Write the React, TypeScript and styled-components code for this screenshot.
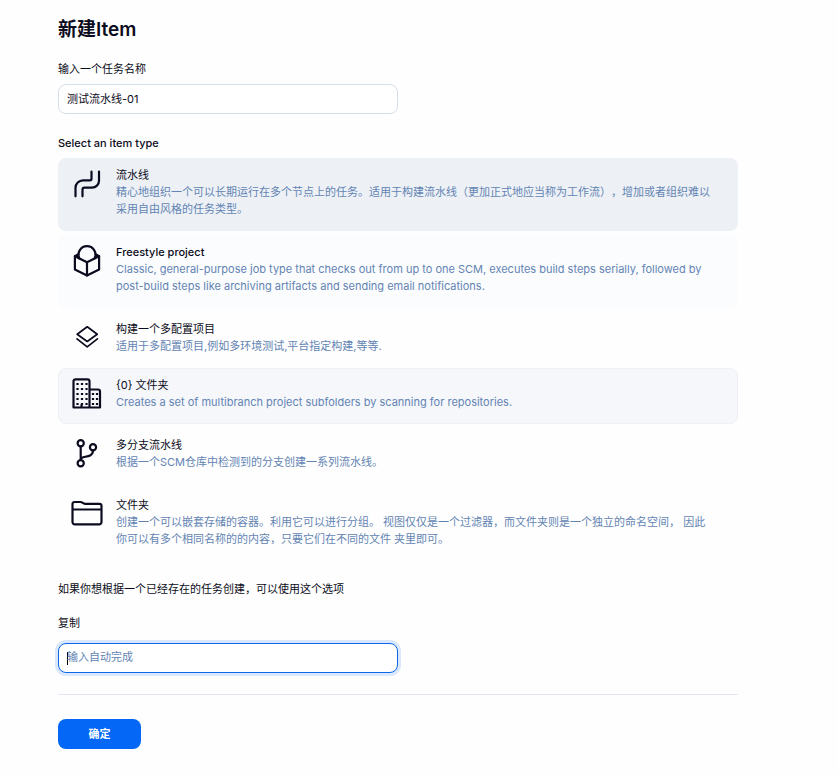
import React, { useState } from "react";
import styled, { createGlobalStyle } from "styled-components";

const ink = "#0b0b20";
const muted = "#6384b3";

const GlobalStyle = createGlobalStyle`
  *, *::before, *::after { box-sizing: border-box; }
  body {
    margin: 0;
    background: #fefefe;
    color: ${ink};
    font-family: Inter, "Noto Sans CJK SC", sans-serif;
    font-size: 11px;
    font-weight: 400;
    line-height: 17px;
    text-spacing-trim: space-all;
  }
`;

const Page = styled.form`
  max-width: 838px;
  padding: 17px 100px 26px 58px;
`;

const Title = styled.h1`
  margin: 0 0 19px;
  font-size: 19px;
  line-height: 25px;
  font-weight: 600;
`;

const Field = styled.div<{ $gap: number }>`
  display: flex;
  flex-direction: column;
  gap: ${(p) => p.$gap}px;
`;

const TextInput = styled.input`
  width: 100%;
  max-width: 340px;
  height: 30px;
  padding: 0 8px 2px;
  border: 1px solid #d5dfeb;
  border-radius: 8px;
  background: #fff;
  color: ${ink};
  font: inherit;
  outline: none;

  &::placeholder {
    color: ${muted};
    opacity: 1;
  }
  &:focus {
    border-color: #0a68ea;
    box-shadow: 0 0 0 3px #dae7fc;
  }
  &:focus:placeholder-shown {
    caret-color: transparent;
    background: linear-gradient(#000, #000) 8px center / 1px 13px no-repeat #fff;
  }
`;

const Types = styled.fieldset`
  margin: 21px 0 20px;
  padding: 0;
  border: 0;
  min-width: 0;
`;

const Legend = styled.legend`
  padding: 0;
  margin-bottom: 6px;
  font-weight: 500;
`;

const TypeList = styled.div`
  display: flex;
  flex-direction: column;
  gap: 4px;
`;

type Tone = "plain" | "faint" | "hover" | "selected";
const fills: Record<Tone, string> = {
  plain: "transparent",
  faint: "#fbfcfe",
  hover: "#f6f7fb",
  selected: "#edf1f6",
};

const Option = styled.label<{ $tone: Tone; $compact?: boolean }>`
  display: grid;
  grid-template-columns: 32px 1fr;
  column-gap: 13px;
  padding: 8px 15px ${(p) => (p.$compact ? 8 : 12)}px 12px;
  border: 1px solid ${(p) => (p.$tone === "hover" ? "#eef0f6" : "transparent")};
  border-radius: 8px;
  background: ${(p) => fills[p.$tone]};
  cursor: pointer;

  &:focus-within {
    outline: 2px solid #0a68ea;
  }
`;

const Radio = styled.input`
  position: absolute;
  opacity: 0;
  pointer-events: none;
`;

const IconBox = styled.span`
  padding-top: 1px;
  height: 33px;

  svg {
    display: block;
    width: 32px;
    height: 32px;
    fill: none;
    stroke: ${ink};
    stroke-width: 2.2;
    stroke-linecap: round;
    stroke-linejoin: round;
  }
`;

const Name = styled.span<{ $latin?: boolean }>`
  display: block;
  font-weight: ${(p) => (p.$latin ? 500 : 400)};
`;

const Description = styled.span`
  display: block;
  color: ${muted};
`;

const Paragraph = styled.p`
  margin: 0 0 17px;
`;

const Footer = styled.div`
  margin-top: 21px;
  padding-top: 24px;
  border-top: 1px solid #e3e7f1;
`;

const Submit = styled.button`
  min-width: 83px;
  height: 30px;
  padding: 0 30px;
  border: 0;
  border-radius: 8px;
  background: #0467f5;
  color: #fff;
  font: inherit;
  font-weight: 700;
  cursor: pointer;
`;

const PipelineIcon = () => (
  <svg viewBox="0 0 32 32">
    <path d="M20.500 3.600v7.200a1.500 1.500 0 0 1-1.500 1.500H12A7.500 7.500 0 0 0 4.500 19.800V28.300" />
    <path d="M28 3.600v9.100a7 7 0 0 1-7 7h-7.500a2 2 0 0 0-2 2v6.600" />
  </svg>
);

const FreestyleIcon = () => (
  <svg viewBox="0 0 32 32">
    <path d="M7.500 9.200L3.900 11.200V24.500L16 30.500l12.100-6V11.200L24.500 9.200" />
    <path d="M3.900 11.200L16 17.200l12.100-6M16 17.200v13.300" />
    <path d="M8.300 13.300a8.500 8.500 0 1 1 15.400 0" />
    <path d="M6.500 10.300l1 2M25.500 10.300l-1 2" />
  </svg>
);

const LayersIcon = () => (
  <svg viewBox="0 0 32 32">
    <path d="M16.200 4.800L26.200 12.200 16.200 19.500 6.200 12.200z" strokeWidth="1.700" />
    <path d="M6 16.800l10.200 8 10.200-8" strokeWidth="1.700" />
  </svg>
);

const BuildingsIcon = () => (
  <svg viewBox="0 0 32 32">
    <path d="M2.500 29.500V3.300A2 2 0 0 1 4.500 1.300h12a2 2 0 0 1 2 2v26.200zM18.500 11.500h8.500a2 2 0 0 1 2 2v16H18.500M10.500 27v2" />
    <path
      strokeLinecap="butt"
      strokeDasharray="2 3"
      d="M6.500 5v22M11 5v22M15.500 5v22M22 15v12M26 15v12"
    />
  </svg>
);

const BranchIcon = () => (
  <svg viewBox="0 0 32 32">
    <circle cx="9.700" cy="5.200" r="3.100" />
    <circle cx="9.700" cy="25.300" r="3.100" />
    <circle cx="22" cy="9.300" r="3.100" />
    <path d="M9.700 8.500v13.500M9.700 21c.8-3.600 12.300-.500 12.300-8.500" />
  </svg>
);

const FolderIcon = () => (
  <svg viewBox="0 0 32 32">
    <path d="M1.500 24V6a2 2 0 0 1 2-2h6c2 0 2.500 1.800 4.500 1.800h14.500a2 2 0 0 1 2 2V24a2.400 2.400 0 0 1-2.400 2.400H3.900A2.400 2.400 0 0 1 1.500 24zM1.500 11.500h29" />
  </svg>
);

interface ItemType {
  id: string;
  name: string;
  latin?: boolean;
  lines: string[];
  icon: React.ReactNode;
  tone: Tone;
  compact?: boolean;
}

const itemTypes: ItemType[] = [
  {
    id: "pipeline",
    name: "流水线",
    lines: [
      "精心地组织一个可以长期运行在多个节点上的任务。适用于构建流水线（更加正式地应当称为工作流），增加或者组织难以",
      "采用自由风格的任务类型。",
    ],
    icon: <PipelineIcon />,
    tone: "plain",
  },
  {
    id: "freestyle",
    name: "Freestyle project",
    latin: true,
    lines: [
      "Classic, general-purpose job type that checks out from up to one SCM, executes build steps serially, followed by",
      "post-build steps like archiving artifacts and sending email notifications.",
    ],
    icon: <FreestyleIcon />,
    tone: "faint",
  },
  {
    id: "matrix",
    name: "构建一个多配置项目",
    lines: ["适用于多配置项目,例如多环境测试,平台指定构建,等等."],
    icon: <LayersIcon />,
    tone: "plain",
    compact: true,
  },
  {
    id: "organization",
    name: "{0} 文件夹",
    lines: ["Creates a set of multibranch project subfolders by scanning for repositories."],
    icon: <BuildingsIcon />,
    tone: "hover",
  },
  {
    id: "multibranch",
    name: "多分支流水线",
    lines: ["根据一个SCM仓库中检测到的分支创建一系列流水线。"],
    icon: <BranchIcon />,
    tone: "plain",
  },
  {
    id: "folder",
    name: "文件夹",
    lines: [
      "创建一个可以嵌套存储的容器。利用它可以进行分组。 视图仅仅是一个过滤器，而文件夹则是一个独立的命名空间， 因此",
      "你可以有多个相同名称的的内容，只要它们在不同的文件 夹里即可。",
    ],
    icon: <FolderIcon />,
    tone: "plain",
  },
];

export default function App() {
  const [name, setName] = useState("测试流水线-01");
  const [from, setFrom] = useState("");
  const [selected, setSelected] = useState("pipeline");

  return (
    <>
      <GlobalStyle />
      <Page onSubmit={(e) => e.preventDefault()}>
        <Title>新建Item</Title>
        <Field $gap={6}>
          <label htmlFor="name">输入一个任务名称</label>
          <TextInput id="name" value={name} onChange={(e) => setName(e.target.value)} />
        </Field>

        <Types>
          <Legend>Select an item type</Legend>
          <TypeList>
            {itemTypes.map((t) => (
              <Option key={t.id} $compact={t.compact} $tone={selected === t.id ? "selected" : t.tone}>
                <IconBox aria-hidden="true">{t.icon}</IconBox>
                <span>
                  <Radio
                    type="radio"
                    name="mode"
                    value={t.id}
                    checked={selected === t.id}
                    onChange={() => setSelected(t.id)}
                  />
                  <Name $latin={t.latin}>{t.name}</Name>
                  {t.lines.map((line) => (
                    <Description key={line}>{line}</Description>
                  ))}
                </span>
              </Option>
            ))}
          </TypeList>
        </Types>

        <Paragraph>如果你想根据一个已经存在的任务创建，可以使用这个选项</Paragraph>
        <Field $gap={11}>
          <label htmlFor="from">复制</label>
          <TextInput
            id="from"
            placeholder="输入自动完成"
            value={from}
            onChange={(e) => setFrom(e.target.value)}
            autoFocus
          />
        </Field>

        <Footer>
          <Submit type="submit">确定</Submit>
        </Footer>
      </Page>
    </>
  );
}
